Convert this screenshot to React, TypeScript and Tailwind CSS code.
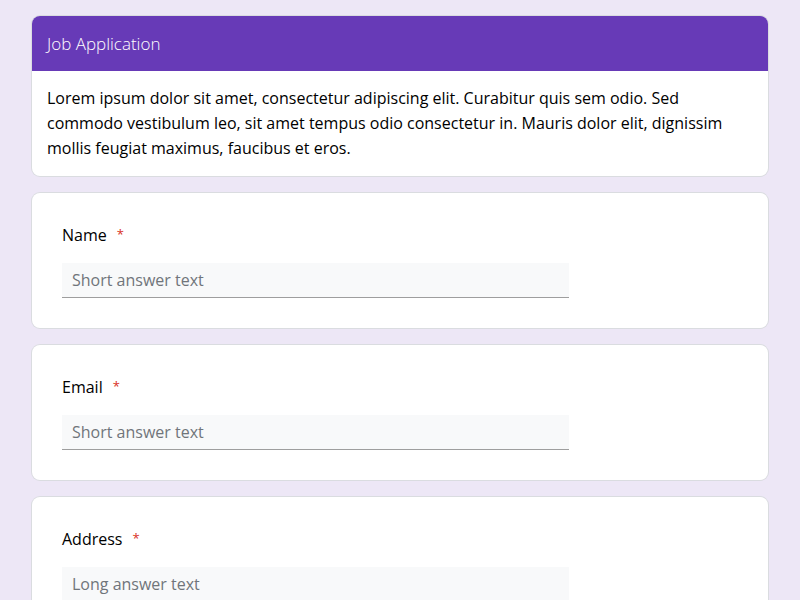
import React from 'react'

const font = { fontFamily: '"Open Sans", "Liberation Sans", sans-serif' }

function Field({ label, placeholder, long }: { label: string; placeholder: string; long?: boolean }) {
  return (
    <section className="bg-white shadow-[0_0_0_1px_#dadce0] rounded-lg px-[30px] py-[30px]">
      <label className="flex items-start text-[16px] leading-[24px] text-black">
        {label}
        <span className="ml-[10px] mt-[2px] text-[13px] leading-[18px] text-[#d93025]">*</span>
      </label>
      {long ? (
        <textarea
          placeholder={placeholder}
          rows={3}
          className="mt-4 block w-3/4 bg-[#f8f9fa] px-[10px] py-[5px] text-[16px] leading-[25px] placeholder-[#70757a] border-b border-[#9e9e9e] outline-none resize-none"
        />
      ) : (
        <input
          type="text"
          placeholder={placeholder}
          className="mt-4 block w-3/4 h-[35px] bg-[#f8f9fa] px-[10px] text-[16px] placeholder-[#70757a] border-b border-[#9e9e9e] outline-none"
        />
      )}
    </section>
  )
}

export default function App() {
  return (
    <div className="min-h-screen bg-[#ede7f6] px-8 py-4" style={font}>
      <div className="flex flex-col gap-[17px]">
        <section className="bg-white shadow-[0_0_0_1px_#dadce0] rounded-lg overflow-hidden">
          <div className="bg-[#673ab7] px-[15px] py-[15px] text-[17px] leading-[25px] text-white font-light">
            Job Application
          </div>
          <p className="px-[15px] py-[15px] text-[16px] leading-[25px] text-black">
            Lorem ipsum dolor sit amet, consectetur adipiscing elit. Curabitur quis sem odio. Sed commodo vestibulum
            leo, sit amet tempus odio consectetur in. Mauris dolor elit, dignissim mollis feugiat maximus, faucibus et
            eros.
          </p>
        </section>
        <Field label="Name" placeholder="Short answer text" />
        <Field label="Email" placeholder="Short answer text" />
        <Field label="Address" placeholder="Long answer text" long />
      </div>
    </div>
  )
}
